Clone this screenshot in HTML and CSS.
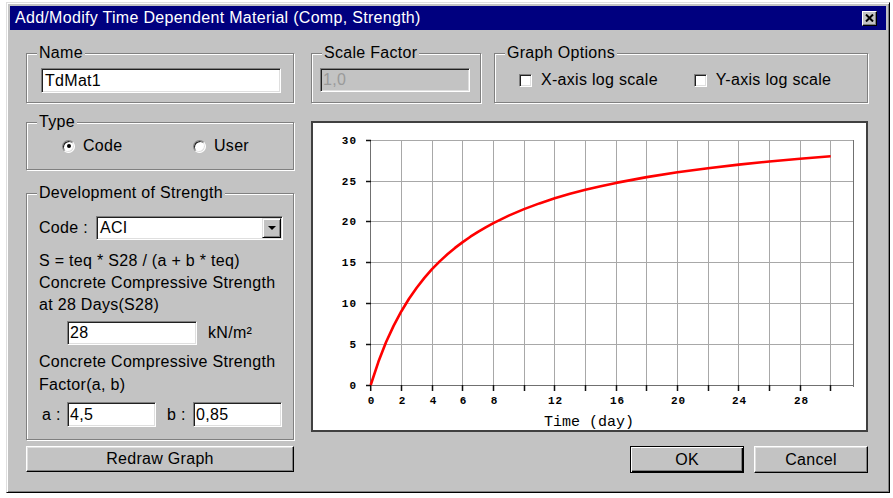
FILE: index.html
```html
<!DOCTYPE html>
<html>
<head>
<meta charset="utf-8">
<title>Add/Modify Time Dependent Material</title>
<link rel="stylesheet" href="styles.css">
</head>
<body>
<div class="window">
  <div class="titlebar">
    <span class="title">Add/Modify Time Dependent Material (Comp, Strength)</span>
    <span class="close">
      <svg width="9" height="8" viewBox="0 0 9 8"><path d="M1 0.5 L8 7.5 M8 0.5 L1 7.5" stroke="#000" stroke-width="2"/></svg>
    </span>
  </div>

  <div class="client">
    <div class="col-left">
      <div class="group g-name">
        <span class="legend">Name</span>
        <div class="field name-field">TdMat1</div>
      </div>

      <div class="group g-type">
        <span class="legend">Type</span>
        <label class="radio-item code-item"><span class="radio checked"></span>Code</label>
        <label class="radio-item"><span class="radio"></span>User</label>
      </div>

      <div class="group g-dev">
        <span class="legend">Development of Strength</span>
        <div class="combo-row">
          <span class="combo-label">Code :</span>
          <div class="field combo">
            <span class="combo-text">ACI</span>
            <span class="combo-btn"><span class="arrow"></span></span>
          </div>
        </div>
        <div class="text-lines">
          <div>S = teq * S28 / (a + b * teq)</div>
          <div>Concrete Compressive Strength</div>
          <div>at 28 Days(S28)</div>
        </div>
        <div class="unit-row">
          <div class="field s28-field">28</div>
          <span class="unit">kN/m²</span>
        </div>
        <div class="text-lines tall">
          <div>Concrete Compressive Strength</div>
          <div>Factor(a, b)</div>
        </div>
        <div class="ab-row">
          <span class="ab-label">a :</span>
          <div class="field ab-field">4,5</div>
          <span class="ab-label b-label">b :</span>
          <div class="field ab-field">0,85</div>
        </div>
      </div>

      <div class="btn redraw">Redraw Graph</div>
    </div>

    <div class="col-right">
      <div class="top-row">
        <div class="group g-scale">
          <span class="legend">Scale Factor</span>
          <div class="field disabled scale-field">1,0</div>
        </div>
        <div class="group g-options">
          <span class="legend">Graph Options</span>
          <label class="check-item"><span class="checkbox"></span>X-axis log scale</label>
          <label class="check-item"><span class="checkbox"></span>Y-axis log scale</label>
        </div>
      </div>

      <div class="graph">
        <svg width="553" height="307" viewBox="313 123 553 307">
          <g class="grid" stroke="#a8a8a8" stroke-width="1" shape-rendering="crispEdges">
            <line x1="371" y1="140.5" x2="853" y2="140.5"/>
            <line x1="371" y1="181.5" x2="853" y2="181.5"/>
            <line x1="371" y1="221.5" x2="853" y2="221.5"/>
            <line x1="371" y1="262.5" x2="853" y2="262.5"/>
            <line x1="371" y1="303.5" x2="853" y2="303.5"/>
            <line x1="371" y1="344.5" x2="853" y2="344.5"/>
            <line x1="401.5" y1="140" x2="401.5" y2="385"/>
            <line x1="432.5" y1="140" x2="432.5" y2="385"/>
            <line x1="462.5" y1="140" x2="462.5" y2="385"/>
            <line x1="493.5" y1="140" x2="493.5" y2="385"/>
            <line x1="524.5" y1="140" x2="524.5" y2="385"/>
            <line x1="554.5" y1="140" x2="554.5" y2="385"/>
            <line x1="585.5" y1="140" x2="585.5" y2="385"/>
            <line x1="616.5" y1="140" x2="616.5" y2="385"/>
            <line x1="646.5" y1="140" x2="646.5" y2="385"/>
            <line x1="677.5" y1="140" x2="677.5" y2="385"/>
            <line x1="708.5" y1="140" x2="708.5" y2="385"/>
            <line x1="738.5" y1="140" x2="738.5" y2="385"/>
            <line x1="769.5" y1="140" x2="769.5" y2="385"/>
            <line x1="800.5" y1="140" x2="800.5" y2="385"/>
            <line x1="830.5" y1="140" x2="830.5" y2="385"/>
          </g>
          <g stroke="#707070" stroke-width="1" shape-rendering="crispEdges">
            <line x1="370.5" y1="140" x2="370.5" y2="386"/>
            <line x1="370" y1="385.5" x2="854" y2="385.5"/>
            <line x1="853.5" y1="140" x2="853.5" y2="387"/>
          </g>
          <g class="ticks" stroke="#111" stroke-width="1.5">
            <line x1="366" y1="140.5" x2="371" y2="140.5"/>
            <line x1="366" y1="181.5" x2="371" y2="181.5"/>
            <line x1="366" y1="221.5" x2="371" y2="221.5"/>
            <line x1="366" y1="262.5" x2="371" y2="262.5"/>
            <line x1="366" y1="303.5" x2="371" y2="303.5"/>
            <line x1="366" y1="344.5" x2="371" y2="344.5"/>
            <line x1="366" y1="385.5" x2="371" y2="385.5"/>
            <line x1="370.7" y1="385" x2="370.7" y2="391"/>
            <line x1="401.5" y1="385" x2="401.5" y2="391"/>
            <line x1="432.5" y1="385" x2="432.5" y2="391"/>
            <line x1="462.5" y1="385" x2="462.5" y2="391"/>
            <line x1="493.5" y1="385" x2="493.5" y2="391"/>
            <line x1="524.5" y1="385" x2="524.5" y2="391"/>
            <line x1="554.5" y1="385" x2="554.5" y2="391"/>
            <line x1="585.5" y1="385" x2="585.5" y2="391"/>
            <line x1="616.5" y1="385" x2="616.5" y2="391"/>
            <line x1="646.5" y1="385" x2="646.5" y2="391"/>
            <line x1="677.5" y1="385" x2="677.5" y2="391"/>
            <line x1="708.5" y1="385" x2="708.5" y2="391"/>
            <line x1="738.5" y1="385" x2="738.5" y2="391"/>
            <line x1="769.5" y1="385" x2="769.5" y2="391"/>
            <line x1="800.5" y1="385" x2="800.5" y2="391"/>
            <line x1="830.5" y1="385" x2="830.5" y2="391"/>
          </g>
          <g class="ylabels" text-anchor="end">
            <text x="357" y="144">30</text>
            <text x="357" y="185">25</text>
            <text x="357" y="225">20</text>
            <text x="357" y="266">15</text>
            <text x="357" y="307">10</text>
            <text x="357" y="348">5</text>
            <text x="357" y="389">0</text>
          </g>
          <g class="xlabels" text-anchor="middle">
            <text x="371.5" y="404">0</text>
            <text x="402.5" y="404">2</text>
            <text x="433.5" y="404">4</text>
            <text x="463.5" y="404">6</text>
            <text x="494.5" y="404">8</text>
            <text x="555.5" y="404">12</text>
            <text x="617.5" y="404">16</text>
            <text x="678.5" y="404">20</text>
            <text x="739.5" y="404">24</text>
            <text x="801.5" y="404">28</text>
          </g>
          <text class="axis-title" x="544" y="426">Time (day)</text>
          <polyline class="curve" fill="none" stroke="#ff0000" stroke-width="2.6" stroke-linejoin="round"
            points="370.7,385 378.4,361.8 386,342.3 393.7,325.6 401.4,311.2 409,298.7 416.7,287.7 424.4,277.9 432,269.2 439.7,261.4 447.4,254.3 455,247.9 462.7,242.1 470.4,236.7 478,231.8 485.7,227.3 493.4,223.1 508.7,215.6 524,209.1 539.4,203.4 554.7,198.3 570,193.8 585.4,189.8 600.7,186.2 616,182.9 646.7,177.1 677.4,172.3 708,168.2 738.7,164.6 769.3,161.5 800,158.8 830.7,156.3"/>
        </svg>
      </div>

      <div class="btn-row">
        <div class="btn btn-default">OK</div>
        <div class="btn">Cancel</div>
      </div>
    </div>
  </div>
</div>
</body>
</html>
```

FILE: styles.css
```css
* {
  box-sizing: border-box;
}

body {
  margin: 0;
  background: #fff;
  font-family: "Liberation Sans", Arial, sans-serif;
  font-size: 16px;
  letter-spacing: 0.3px;
  color: #000;
}

/* dialog frame */
.window {
  margin: 2px 0 0 6px;
  width: 884px;
  height: 491px;
  background: #c3c3c3;
  border: 1px solid;
  border-color: #dfdfdf #000 #000 #dfdfdf;
  box-shadow: inset 1px 1px 0 #fff, inset -1px -1px 0 #808080;
  padding: 3px;
  display: flex;
  flex-direction: column;
}

.titlebar {
  height: 24px;
  background: #00007f;
  color: #fff;
  display: flex;
  align-items: center;
  justify-content: space-between;
  padding: 0 9px 0 5px;
}

.title {
  line-height: 16px;
}

.close {
  width: 15px;
  height: 15px;
  background: #c3c3c3;
  border: 1px solid;
  border-color: #fff #000 #000 #fff;
  box-shadow: inset -1px -1px 0 #808080;
  display: flex;
  align-items: center;
  justify-content: center;
}

.close svg {
  display: block;
}

/* client area */
.client {
  flex: 1;
  display: flex;
  column-gap: 17px;
  padding: 23px 0 0 16px;
}

.col-left {
  width: 268px;
  display: flex;
  flex-direction: column;
}

.col-right {
  width: 557px;
  display: flex;
  flex-direction: column;
}

/* etched group box */
.group {
  position: relative;
  border: 1px solid #808080;
  box-shadow: 1px 1px 0 #fff, inset 1px 1px 0 #fff;
}

.legend {
  position: absolute;
  top: -9px;
  left: 10px;
  padding: 0 2px;
  line-height: 16px;
  background: #c3c3c3;
  white-space: nowrap;
}

/* sunken edit field */
.field {
  background: #fff;
  border: 1px solid;
  border-color: #808080 #fff #fff #808080;
  box-shadow: inset 1px 1px 0 #202020, inset -1px -1px 0 #dfdfdf;
  padding: 0 3px;
  display: flex;
  align-items: center;
  line-height: 16px;
  white-space: nowrap;
}

.field.disabled {
  background: #c3c3c3;
  color: #9a9a9a;
}

.g-name {
  height: 50px;
  padding: 14px 0 0 14px;
}

.name-field {
  width: 240px;
  height: 25px;
}

.g-type {
  margin-top: 19px;
  height: 48px;
  display: flex;
  align-items: center;
  padding-left: 35px;
}

.radio-item {
  display: flex;
  align-items: center;
  gap: 8px;
  line-height: 16px;
}

.code-item {
  width: 131px;
}

.radio {
  width: 13px;
  height: 13px;
  border-radius: 50%;
  background: #fff;
  border: 1px solid;
  border-color: #808080 #fff #fff #808080;
  box-shadow: inset 1px 1px 0 #202020, inset -1px -1px 0 #dfdfdf;
  display: flex;
  align-items: center;
  justify-content: center;
}

.radio.checked::after {
  content: "";
  width: 4px;
  height: 4px;
  border-radius: 50%;
  background: #000;
}

.g-dev {
  margin-top: 23px;
  height: 247px;
  padding: 22px 0 0 12px;
}

.combo-row {
  display: flex;
  align-items: center;
  height: 24px;
}

.combo-label {
  width: 57px;
}

.combo {
  width: 187px;
  height: 24px;
  justify-content: space-between;
  padding: 0 1px 0 3px;
}

.combo-btn {
  width: 19px;
  height: 20px;
  background: #c3c3c3;
  border: 1px solid;
  border-color: #dfdfdf #000 #000 #dfdfdf;
  box-shadow: inset 1px 1px 0 #fff, inset -1px -1px 0 #808080;
  display: flex;
  align-items: center;
  justify-content: center;
}

.arrow {
  width: 0;
  height: 0;
  border-left: 4px solid transparent;
  border-right: 4px solid transparent;
  border-top: 4px solid #000;
}

.text-lines {
  margin-top: 10px;
  line-height: 22px;
  white-space: nowrap;
}

.text-lines.tall {
  margin-top: 5px;
  line-height: 23px;
}

.unit-row {
  margin-top: 5px;
  display: flex;
  align-items: center;
  height: 24px;
  padding-left: 28px;
}

.s28-field {
  width: 130px;
  height: 24px;
  padding-left: 2px;
}

.unit {
  margin-left: 11px;
}

.ab-row {
  margin-top: 6px;
  display: flex;
  align-items: center;
  height: 25px;
}

.ab-label {
  width: 28px;
  padding-left: 3px;
}

.b-label {
  width: 37px;
  padding-left: 11px;
}

.ab-field {
  width: 89px;
  height: 25px;
  padding-left: 2px;
}

/* raised push button */
.btn {
  height: 26px;
  display: flex;
  align-items: center;
  justify-content: center;
  background: #c3c3c3;
  border: 1px solid;
  border-color: #fff #000 #000 #fff;
  box-shadow: inset -1px -1px 0 #808080, inset 1px 1px 0 #dfdfdf;
  line-height: 16px;
}

.redraw {
  margin-top: 6px;
}

.top-row {
  display: flex;
  column-gap: 13px;
  height: 50px;
}

.g-scale {
  width: 170px;
  padding: 14px 0 0 8px;
}

.scale-field {
  width: 150px;
  height: 24px;
  padding-left: 2px;
}

.g-options {
  width: 374px;
  display: flex;
  align-items: center;
  column-gap: 36px;
  padding: 4px 0 0 24px;
}

.check-item {
  display: flex;
  align-items: center;
  gap: 9px;
  line-height: 16px;
  white-space: nowrap;
}

.checkbox {
  width: 13px;
  height: 13px;
  background: #fff;
  border: 1px solid;
  border-color: #808080 #fff #fff #808080;
  box-shadow: inset 1px 1px 0 #202020, inset -1px -1px 0 #dfdfdf;
}

/* chart panel */
.graph {
  margin-top: 18px;
  height: 311px;
  background: #fff;
  border: 2px solid #404040;
}

.graph svg {
  display: block;
}

.ylabels text,
.xlabels text {
  font-family: "Liberation Mono", "DejaVu Sans Mono", monospace;
  font-size: 11px;
  font-weight: bold;
  letter-spacing: 1px;
  fill: #000;
}

.axis-title {
  font-family: "Liberation Mono", "DejaVu Sans Mono", monospace;
  font-size: 15px;
  letter-spacing: 0;
  fill: #000;
}

.btn-row {
  margin-top: 14px;
  display: flex;
  justify-content: flex-end;
  column-gap: 10px;
}

.btn-row .btn {
  width: 114px;
  height: 27px;
}

.btn-default {
  border-color: #000;
  box-shadow: inset 1px 1px 0 #fff, inset -1px -1px 0 #000, inset -2px -2px 0 #808080;
}
```
